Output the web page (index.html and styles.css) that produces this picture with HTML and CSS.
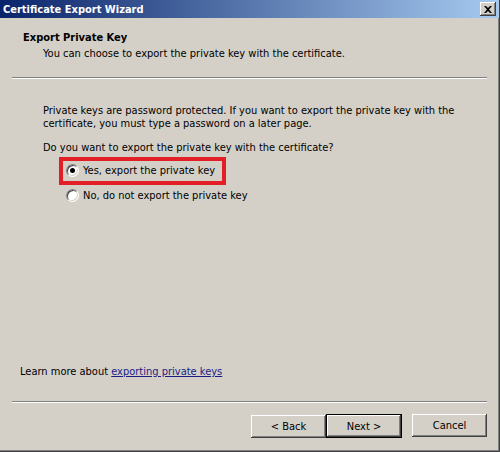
FILE: index.html
```html
<!DOCTYPE html>
<html>
<head>
<meta charset="utf-8">
<link rel="stylesheet" href="styles.css">
</head>
<body>
<div class="window">
  <div class="titlebar">
    <span class="title">Certificate Export Wizard</span>
    <span class="close"><svg width="8" height="7" viewBox="0 0 8 7"><path d="M0 0h2l2 2 2-2h2L5 3.5 8 7H6L4 5 2 7H0l3-3.5z" fill="#000"/></svg></span>
  </div>
  <div class="header">
    <div class="h-title">Export Private Key</div>
    <div class="h-sub">You can choose to export the private key with the certificate.</div>
  </div>
  <div class="sep"></div>
  <div class="content">
    <p class="para">Private keys are password protected. If you want to export the private key with the certificate, you must type a password on a later page.</p>
    <p class="question">Do you want to export the private key with the certificate?</p>
    <div class="options">
      <div class="highlight">
        <label class="option">
          <span class="radio checked"></span>
          <span>Yes, export the private key</span>
        </label>
      </div>
      <label class="option plain">
        <span class="radio"></span>
        <span>No, do not export the private key</span>
      </label>
    </div>
  </div>
  <div class="learn">Learn more about <a class="link">exporting private keys</a></div>
  <div class="sep"></div>
  <div class="buttons">
    <div class="btn-pair">
      <button class="btn">&lt; Back</button>
      <span class="default-frame"><button class="btn">Next &gt;</button></span>
    </div>
    <button class="btn">Cancel</button>
  </div>
</div>
</body>
</html>
```
FILE: styles.css
```css
* { box-sizing: border-box; }
html, body { margin: 0; padding: 0; }
body {
  width: 500px;
  height: 452px;
  overflow: hidden;
  font-family: "DejaVu Sans", sans-serif;
  font-stretch: condensed;
  font-size: 11px;
  line-height: 13px;
  color: #000;
  background: #d4d0c8;
}
.window {
  width: 500px;
  height: 452px;
  display: flex;
  flex-direction: column;
  background: #d4d0c8;
  border-right: 1px solid #404040;
  border-bottom: 1px solid #404040;
  box-shadow: inset -1px -1px 0 #808080;
}
.titlebar {
  height: 18px;
  flex: none;
  display: flex;
  align-items: center;
  justify-content: space-between;
  padding: 0 3px 0 3px;
  background: linear-gradient(to right, #0a246a, #a6caf0);
}
.title {
  color: #fff;
  font-weight: bold;
  font-size: 11px;
}
.close {
  width: 16px;
  height: 14px;
  display: flex;
  align-items: center;
  justify-content: center;
  background: #d4d0c8;
  box-shadow: inset -1px -1px 0 #404040, inset 1px 1px 0 #fff, inset -2px -2px 0 #808080;
}
.header {
  padding: 13px 0 0 23px;
  height: 59px;
  flex: none;
}
.h-title { font-weight: bold; }
.h-sub { margin-top: 3px; padding-left: 20px; }
.sep {
  flex: none;
  margin: 0 12px 0 12px;
  height: 2px;
  border-top: 1px solid #808080;
  border-bottom: 1px solid #fff;
}
.content {
  flex: 1;
  padding: 25px 0 0 43px;
}
.para { margin: 0; width: 445px; }
.question { margin: 11px 0 0 0; }
.options {
  margin: 3px 0 0 16px;
}
.highlight {
  display: inline-block;
  border: 4px solid #e21f26;
  padding: 3px 7px 4px 3px;
}
.option {
  display: flex;
  align-items: center;
  gap: 4px;
}
.option.plain {
  margin: 4px 0 0 7px;
}
.radio {
  width: 13px;
  height: 13px;
  flex: none;
  border-radius: 50%;
  background: #fff;
  border: 1px solid;
  border-color: #808080 #fff #fff #808080;
  box-shadow: inset 1px 1px 0 #404040, inset -1px -1px 0 #d4d0c8;
  position: relative;
}
.radio.checked::after {
  content: "";
  position: absolute;
  left: 3px;
  top: 3px;
  width: 5px;
  height: 5px;
  border-radius: 50%;
  background: #000;
}
.learn {
  flex: none;
  padding: 0 0 23px 20px;
}
.link {
  color: #1c1c86;
  text-decoration: underline;
}
.buttons {
  flex: none;
  height: 48px;
  display: flex;
  align-items: flex-start;
  justify-content: flex-end;
  gap: 10px;
  padding: 11px 12px 0 0;
}
.btn-pair {
  display: flex;
}
.default-frame {
  display: block;
  border: 1px solid #000;
}
.btn {
  width: 75px;
  height: 23px;
  margin: 0;
  padding: 0;
  font: inherit;
  color: #000;
  background: #d4d0c8;
  border: none;
  box-shadow: inset -1px -1px 0 #404040, inset 1px 1px 0 #fff, inset -2px -2px 0 #808080;
}
.default-frame .btn {
  width: 74px;
  height: 22px;
}
.btn-pair > .btn { margin-top: 1px; }
```
